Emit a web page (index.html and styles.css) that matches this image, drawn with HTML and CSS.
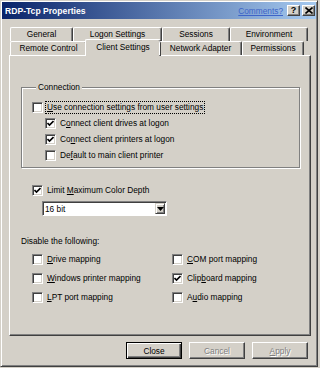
FILE: index.html
```html
<!DOCTYPE html>
<html lang="en">
<head>
  <meta charset="UTF-8">
  <title>RDP-Tcp Properties</title>
  <link rel="stylesheet" href="styles.css">
</head>
<body>
  <div class="window">
    <div class="titlebar">
      <span class="title">RDP-Tcp Properties</span>
      <a href="#" class="comments">Comments?</a>
      <span class="cap-btn help">?</span>
      <span class="cap-btn close">
        <svg width="8" height="7" viewBox="0 0 8 7"><path d="M0.5 0.5 L7.5 6.5 M7.5 0.5 L0.5 6.5" stroke="#000" stroke-width="1.6"/></svg>
      </span>
    </div>

    <div class="client">
      <!-- Tabs: back row, then front row -->
      <div class="tab-row back">
        <div class="tab w-general">General</div>
        <div class="tab w-logon">Logon Settings</div>
        <div class="tab w-sessions">Sessions</div>
        <div class="tab w-env">Environment</div>
      </div>
      <div class="tab-row front">
        <div class="tab w-remote">Remote Control</div>
        <div class="tab w-client active">Client Settings</div>
        <div class="tab w-network">Network Adapter</div>
        <div class="tab w-perm">Permissions</div>
      </div>

      <div class="panel">
        <div class="group">
          <div class="group-title">Connection</div>
          <div class="check-row first">
            <span class="box"></span>
            <span class="label focus"><u>U</u>se connection settings from user settings</span>
          </div>
          <div class="check-row sub">
            <span class="box checked"><svg width="7" height="7" viewBox="0 0 7 7"><path d="M0.5 3 L2.5 5 L6.5 1" fill="none" stroke="#000" stroke-width="1.6"/></svg></span>
            <span class="label">C<u>o</u>nnect client drives at logon</span>
          </div>
          <div class="check-row sub">
            <span class="box checked"><svg width="7" height="7" viewBox="0 0 7 7"><path d="M0.5 3 L2.5 5 L6.5 1" fill="none" stroke="#000" stroke-width="1.6"/></svg></span>
            <span class="label">Co<u>n</u>nect client printers at logon</span>
          </div>
          <div class="check-row sub">
            <span class="box"></span>
            <span class="label">De<u>f</u>ault to main client printer</span>
          </div>
        </div>

        <div class="check-row limit">
          <span class="box checked"><svg width="7" height="7" viewBox="0 0 7 7"><path d="M0.5 3 L2.5 5 L6.5 1" fill="none" stroke="#000" stroke-width="1.6"/></svg></span>
          <span class="label">Limit <u>M</u>aximum Color Depth</span>
        </div>
        <div class="select">
          <span class="select-text">16 bit</span>
          <span class="select-btn"><svg width="7" height="4" viewBox="0 0 7 4"><path d="M0 0 H7 L3.5 4 Z" fill="#000"/></svg></span>
        </div>

        <div class="disable-label">Disable the following:</div>
        <div class="map-grid">
          <div class="check-row">
            <span class="box"></span>
            <span class="label"><u>D</u>rive mapping</span>
          </div>
          <div class="check-row">
            <span class="box"></span>
            <span class="label"><u>C</u>OM port mapping</span>
          </div>
          <div class="check-row">
            <span class="box"></span>
            <span class="label"><u>W</u>indows printer mapping</span>
          </div>
          <div class="check-row">
            <span class="box checked"><svg width="7" height="7" viewBox="0 0 7 7"><path d="M0.5 3 L2.5 5 L6.5 1" fill="none" stroke="#000" stroke-width="1.6"/></svg></span>
            <span class="label">Clip<u>b</u>oard mapping</span>
          </div>
          <div class="check-row">
            <span class="box"></span>
            <span class="label"><u>L</u>PT port mapping</span>
          </div>
          <div class="check-row">
            <span class="box"></span>
            <span class="label">A<u>u</u>dio mapping</span>
          </div>
        </div>
      </div>

      <div class="buttons">
        <button class="btn default">Close</button>
        <button class="btn disabled">Cancel</button>
        <button class="btn disabled"><u>A</u>pply</button>
      </div>
    </div>
  </div>
</body>
</html>
```

FILE: styles.css
```css
/* Base */
body {
  margin: 0;
  background: #d4d0c8;
  font-family: "Liberation Sans", Arial, sans-serif;
  font-size: 8.3px;
  color: #000;
}

u {
  text-decoration: underline;
  text-underline-offset: 1px;
}

/* Window frame */
.window {
  width: 318px;
  height: 367px;
  box-sizing: border-box;
  border: 1px solid;
  border-color: #d4d0c8 #404040 #404040 #d4d0c8;
  box-shadow: inset 1px 1px 0 #fff, inset -1px -1px 0 #808080;
  padding: 1px;
  display: flex;
  flex-direction: column;
}

/* Title bar */
.titlebar {
  height: 17px;
  display: flex;
  align-items: center;
  padding: 0 1px 0 3px;
  background: linear-gradient(to right, #0a246a, #a6caf0);
}

.title {
  flex: 1;
  color: #fff;
  font-weight: bold;
  font-size: 8.6px;
}

.comments {
  color: #3d64c8;
  font-size: 8.3px;
  margin-right: 2px;
}

.cap-btn {
  width: 13px;
  height: 11px;
  box-sizing: border-box;
  margin-left: 2px;
  background: #d4d0c8;
  border: 1px solid;
  border-color: #fff #404040 #404040 #fff;
  box-shadow: inset -1px -1px 0 #808080;
  display: flex;
  align-items: center;
  justify-content: center;
  font-weight: bold;
  font-size: 9px;
  line-height: 9px;
}

/* Client area */
.client {
  flex: 1;
  padding: 8px 5px 0 7px;
}

/* Tabs */
.tab-row {
  display: flex;
  height: 14px;
  margin-left: 1px;
}

.tab {
  box-sizing: border-box;
  height: 14px;
  border-top: 1px solid #fff;
  border-left: 1px solid #fff;
  border-right: 1px solid #404040;
  border-radius: 2px 2px 0 0;
  box-shadow: inset -1px 0 0 #808080;
  text-align: center;
  line-height: 13px;
}

.tab-row.front {
  position: relative;
  z-index: 1;
}

.tab.active {
  height: 17px;
  margin: -2px -2px 0 -2px;
  padding: 0 2px;
  background: #d4d0c8;
  line-height: 14px;
}

.w-general { width: 63px; }
.w-logon { width: 89px; }
.w-sessions { width: 68px; }
.w-env { width: 78px; }
.w-remote { width: 77px; }
.w-client { width: 76px; }
.w-network { width: 83px; }
.w-perm { width: 62px; }

/* Tab page */
.panel {
  height: 281px;
  box-sizing: border-box;
  border: 1px solid;
  border-color: #fff #404040 #404040 #fff;
  box-shadow: inset -1px -1px 0 #808080;
  padding: 31px 10px 0 10px;
}

/* Group box */
.group {
  border: 1px solid #808080;
  box-shadow: 1px 1px 0 #fff, inset 1px 1px 0 #fff;
  margin-left: 1px;
  padding: 0 0 4px 10px;
}

.group-title {
  width: fit-content;
  margin: -6px 0 0 4px;
  padding: 0 2px;
  line-height: 11px;
  background: #d4d0c8;
}

/* Check boxes */
.check-row {
  display: flex;
  align-items: center;
  height: 16px;
  gap: 3px;
}

.check-row.first {
  margin-top: 6px;
}

.check-row.sub {
  margin-left: 13px;
}

.check-row.limit {
  margin: 14px 0 0 12px;
}

.box {
  width: 11px;
  height: 11px;
  box-sizing: border-box;
  background: #fff;
  border: 1px solid;
  border-color: #808080 #fff #fff #808080;
  box-shadow: inset 1px 1px 0 #404040, inset -1px -1px 0 #d4d0c8;
  display: flex;
  align-items: center;
  justify-content: center;
}

.label {
  padding: 0 1px;
  line-height: 11px;
}

.label.focus {
  outline: 1px dotted #000;
}

/* Drop-down */
.select {
  width: 125px;
  height: 15px;
  box-sizing: border-box;
  margin: 3px 0 0 22px;
  background: #fff;
  border: 1px solid;
  border-color: #808080 #fff #fff #808080;
  box-shadow: inset 1px 1px 0 #404040;
  display: flex;
  align-items: center;
  padding: 1px 1px 1px 2px;
}

.select-text {
  flex: 1;
}

.select-btn {
  width: 10px;
  height: 11px;
  box-sizing: border-box;
  background: #d4d0c8;
  border: 1px solid;
  border-color: #d4d0c8 #404040 #404040 #d4d0c8;
  box-shadow: inset 1px 1px 0 #fff, inset -1px -1px 0 #808080;
  display: flex;
  align-items: center;
  justify-content: center;
}

.disable-label {
  margin: 19px 0 0 1px;
  line-height: 12px;
}

.map-grid {
  display: grid;
  grid-template-columns: 140px 140px;
  row-gap: 3px;
  margin: 4px 0 0 12px;
}

/* Dialog buttons */
.buttons {
  display: flex;
  justify-content: flex-end;
  gap: 7px;
  margin: 6px 3px 0 0;
}

.btn {
  width: 56px;
  height: 17px;
  box-sizing: border-box;
  background: #d4d0c8;
  border: 1px solid;
  border-color: #fff #404040 #404040 #fff;
  box-shadow: inset -1px -1px 0 #808080;
  font: inherit;
  padding: 0;
}

.btn.default {
  border-color: #000;
  box-shadow: inset 1px 1px 0 #fff, inset -1px -1px 0 #404040, inset -2px -2px 0 #808080;
}

.btn.disabled {
  color: #808080;
  text-shadow: 1px 1px 0 #fff;
}
```
